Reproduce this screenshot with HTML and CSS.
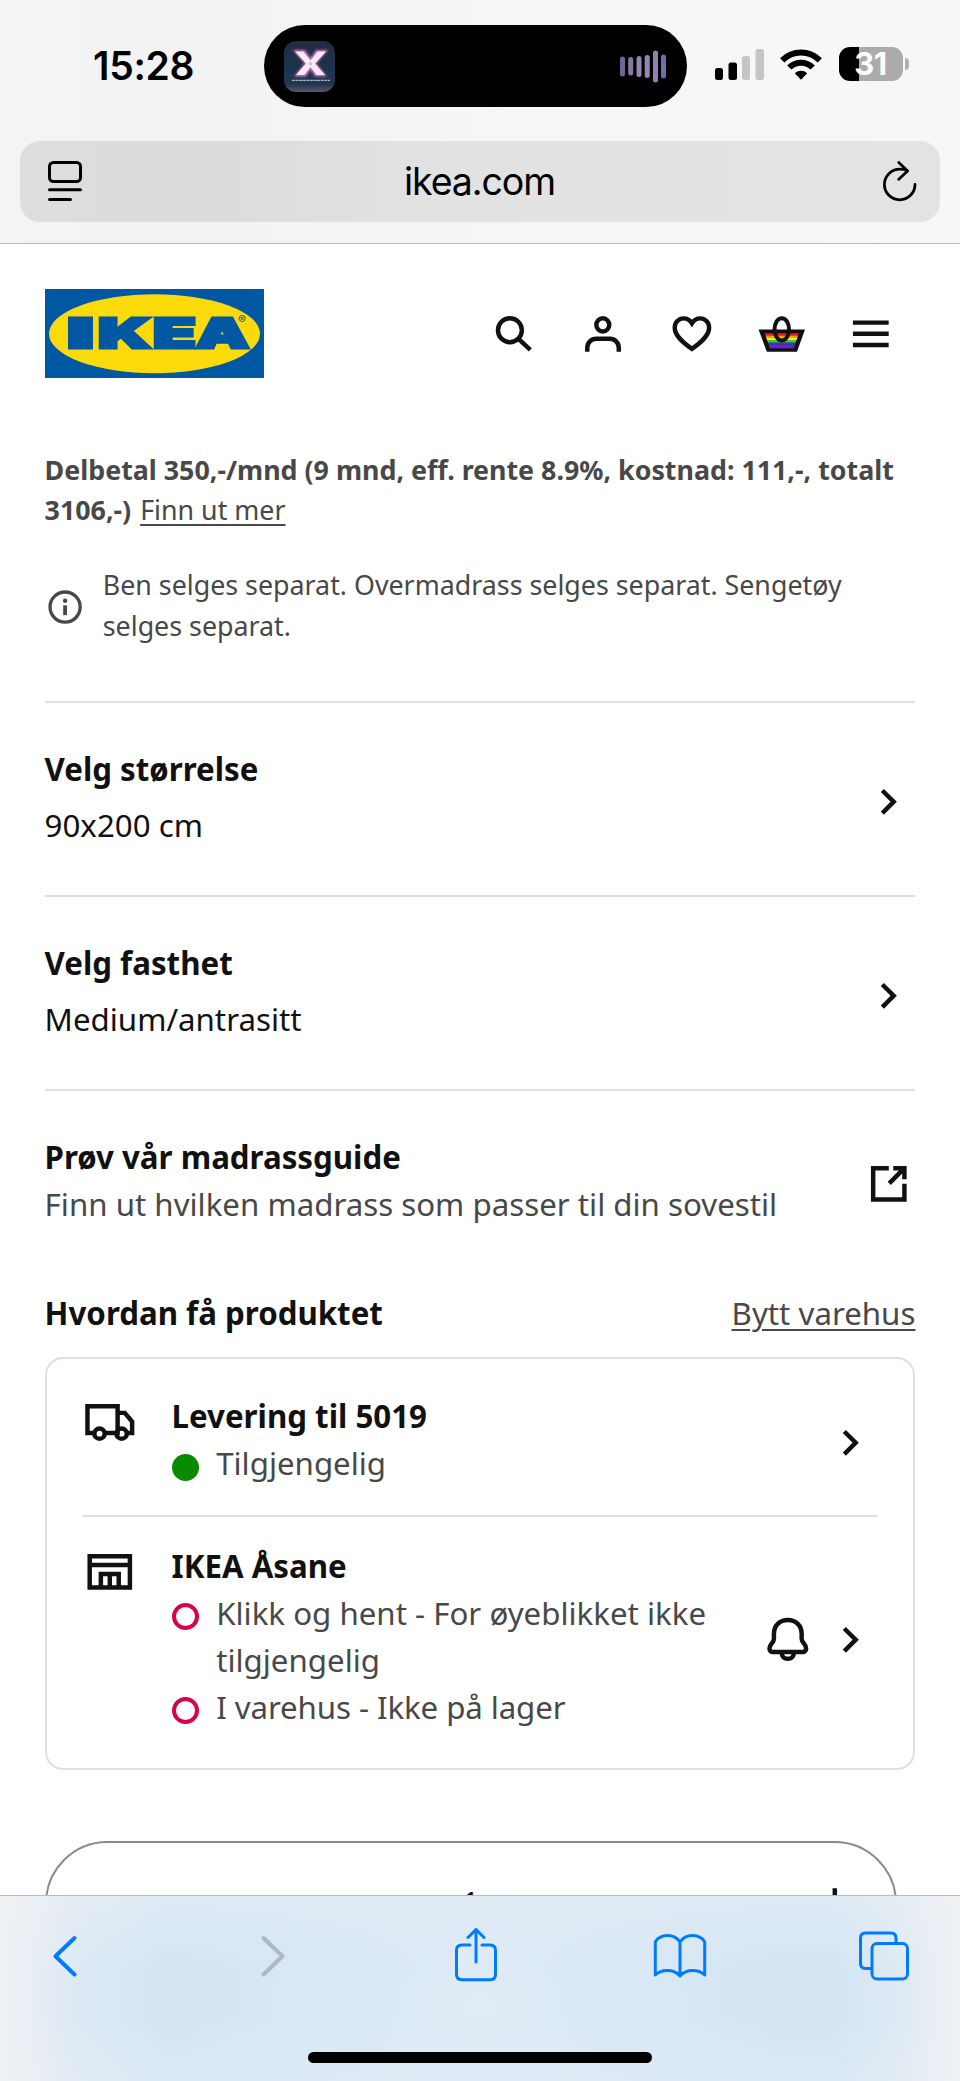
FILE: index.html
```html
<!DOCTYPE html>
<html lang="no">
<head>
<meta charset="utf-8">
<title>ikea.com</title>
<link rel="stylesheet" href="styles.css">
</head>
<body>
<div class="screen">
  <div class="browser-top">
    <div class="status">
      <div class="time">15:28</div>
      <div class="island">
        <svg class="art" viewBox="0 0 51 51">
          <defs>
            <linearGradient id="sky" x1="0" y1="0" x2="0" y2="1"><stop offset="0" stop-color="#222c40"/><stop offset=".6" stop-color="#1b3450"/><stop offset=".85" stop-color="#24364f"/><stop offset="1" stop-color="#5d5468"/></linearGradient>
            <filter id="glow"><feGaussianBlur stdDeviation="1"/></filter>
          </defs>
          <rect width="51" height="51" rx="12" fill="url(#sky)"/>
          <path d="M9 9H21L26.500 17 32 9H44L32.500 22.500 43 35.500H31L26.500 28.500 22 35.500H10L20.500 22.500Z" fill="#d873b4" filter="url(#glow)"/>
          <path d="M11 10.500H19.500L26.500 19.500 33.500 10.500H42L31 22.500 41 34H32.500L26.500 26 20.500 34H12L22 22.500Z" fill="#fbeaf5"/>
          <circle cx="26.500" cy="22.500" r="1.800" fill="#a9d8d0"/>
          <path d="M8 39.300H46" stroke="#9fb4c8" stroke-width="1.300" stroke-dasharray="3 .6"/>
        </svg>
        <svg class="wave" viewBox="0 0 46 33" stroke-width="5" stroke-linecap="round">
          <path d="M2.500 9V24" stroke="#6d6795"/><path d="M10.700 9.500V23" stroke="#86799f"/><path d="M19 8.500V24.500" stroke="#9585ab"/><path d="M27.200 7.500V25.500" stroke="#9586b0"/><path d="M35.500 3V30" stroke="#8b82b6"/><path d="M43.500 7V26" stroke="#6a72ae"/>
        </svg>
      </div>
      <svg class="signal" viewBox="0 0 49 31"><rect y="19" width="8" height="12" rx="2.500"/><rect x="13.500" y="13.500" width="8.500" height="17.500" rx="2.500"/><g fill="#c5c5c5"><rect x="27" y="7" width="8" height="24" rx="2.500"/><rect x="40.500" width="8.500" height="31" rx="2.500"/></g></svg>
      <svg class="wifi" viewBox="0 0 42 31" fill="none" stroke="#000" stroke-width="6"><path d="M2.200 11.300A26.500 26.500 0 0 1 39.800 11.300"/><path d="M9.300 18.500A16.500 16.500 0 0 1 32.700 18.500"/><path d="M14.800 24.200A9 9 0 0 1 27.200 24.200L21 30.700Z" fill="#000" stroke="none"/></svg>
      <div class="battery"><div class="cell">31</div><div class="nub"></div></div>
    </div>
    <div class="address">
      <svg class="reader" viewBox="0 0 34 41" fill="none" stroke="#000" stroke-width="3" stroke-linecap="round"><rect x="1.500" y="1.500" width="31" height="19" rx="4"/><path d="M1.500 28.800H32.500M1.500 38.500H22.500"/></svg>
      <span>ikea.com</span>
      <svg class="reload" viewBox="0 0 34 41" fill="none" stroke="#000" stroke-width="2.800" stroke-linecap="round" stroke-linejoin="round"><path d="M32 23.500A15.300 15.300 0 1 1 16.700 8.200C19.500 8.200 22 8.700 24.500 9.800"/><path d="M15.800 1.500 24.500 10 15.800 18.200"/></svg>
    </div>
  </div>

  <main class="page">
    <header class="header">
      <svg class="logo" viewBox="0 0 219 89">
        <rect width="219" height="89" fill="#0058a3"/>
        <ellipse cx="109.500" cy="44.700" rx="105.500" ry="39.500" fill="#fbda0c"/>
        <text class="wordmark" y="58.500"><tspan x="22" textLength="27" lengthAdjust="spacingAndGlyphs">I</tspan><tspan x="53" textLength="53" lengthAdjust="spacingAndGlyphs">K</tspan><tspan x="108" textLength="43" lengthAdjust="spacingAndGlyphs">E</tspan><tspan x="151" textLength="53" lengthAdjust="spacingAndGlyphs">A</tspan></text>
        <text class="reg" x="193" y="34.500">®</text>
      </svg>
      <nav class="nav">
        <svg class="icon" viewBox="0 0 24 24" fill="none" stroke="#111" stroke-width="2"><circle cx="10.260" cy="10.400" r="5.350"/><path d="M14 14.200 19.400 19.200"/></svg>
        <svg class="icon" viewBox="0 0 24 24" fill="none" stroke="#111" stroke-width="2"><ellipse cx="12" cy="8" rx="2.900" ry="2.950"/><path d="M5.050 20V18.200a4 4 0 0 1 4-4h6.100a4 4 0 0 1 4 4V20"/></svg>
        <svg class="icon" viewBox="0 0 24 24" fill="none" stroke="#111" stroke-width="2"><path d="M12.050 18.750C8.300 16.100 4.350 13 4.350 9.300 4.350 6.900 6.150 5.100 8.300 5.100c1.700 0 2.950.9 3.750 2.200.8-1.300 2.050-2.200 3.750-2.200 2.150 0 3.950 1.800 3.950 4.200 0 3.700-3.950 6.800-7.700 9.450Z"/></svg>
        <svg class="icon" viewBox="0 0 24 24"><path d="M1.600 10.050H22.400L18.800 20H5.300Z" fill="#111"/><path d="M4.400 11.700H19.600L19.200 13H4.800Z" fill="#f21b1b"/><path d="M4.800 12.900H19.200L18.900 14H5.100Z" fill="#ff9a1f"/><path d="M5.100 13.900H18.900L18.500 15H5.500Z" fill="#f6f51d"/><path d="M5.500 14.900H18.500L18.200 16H5.800Z" fill="#35d829"/><path d="M5.800 15.900H18.200L17.900 16.900H6.100Z" fill="#1d49c9"/><path d="M6.100 16.800H17.900L17.400 18.500H6.600Z" fill="#6a1fd6"/><ellipse cx="12" cy="10" rx="3.250" ry="5" fill="none" stroke="#111" stroke-width="1.800"/></svg>
        <svg class="icon" viewBox="0 0 24 24" fill="#111"><path d="M4 6H20V8H4ZM4 11H20V13H4ZM4 16H20V18H4Z"/></svg>
      </nav>
    </header>

    <p class="credit"><b>Delbetal 350,-/mnd (9 mnd, eff. rente 8.9%, kostnad: 111,-, totalt 3106,-)</b> <a>Finn ut mer</a></p>
    <div class="info">
      <svg viewBox="0 0 18 18"><circle cx="9" cy="9" r="6.750" fill="none" stroke="#484848" stroke-width="1.500"/><circle cx="9" cy="6.200" r="1" fill="#484848"/><path d="M8.150 8.200H9.850V12.600H8.150Z" fill="#484848"/></svg>
      <p>Ben selges separat. Overmadrass selges separat. Sengetøy selges separat.</p>
    </div>

    <section class="choice">
      <div><h2>Velg størrelse</h2><p>90x200 cm</p></div>
      <svg class="icon" viewBox="0 0 24 24"><path d="M15.600 12 9.815 17.786 8.400 16.372 12.771 12 8.400 7.629 9.815 6.215Z" fill="#111"/></svg>
    </section>
    <section class="choice">
      <div><h2>Velg fasthet</h2><p>Medium/antrasitt</p></div>
      <svg class="icon" viewBox="0 0 24 24"><path d="M15.600 12 9.815 17.786 8.400 16.372 12.771 12 8.400 7.629 9.815 6.215Z" fill="#111"/></svg>
    </section>
    <section class="choice guide">
      <div><h2>Prøv vår madrassguide</h2><p>Finn ut hvilken madrass som passer til din sovestil</p></div>
      <svg class="icon" viewBox="0 0 24 24" fill="none" stroke="#111" stroke-width="2"><path d="M12 5H5V19H19V12"/><path d="M14 5H19V10M19 5 12.200 11.800"/></svg>
    </section>

    <div class="get-head"><h2>Hvordan få produktet</h2><a>Bytt varehus</a></div>
    <section class="card">
      <div class="ship">
        <svg class="icon" viewBox="0 0 24 24" fill="none" stroke="#111" stroke-width="2"><path d="M4.700 17H2V5H15.500V17H9.700M15.500 8H18.700L22 11.900V17H19.500"/><circle cx="7.400" cy="17.300" r="2.300"/><circle cx="17.300" cy="17.300" r="2.300"/></svg>
        <div class="ship-text">
          <h2>Levering til 5019</h2>
          <p><i class="dot ok"></i>Tilgjengelig</p>
        </div>
        <svg class="icon" viewBox="0 0 24 24"><path d="M15.600 12 9.815 17.786 8.400 16.372 12.771 12 8.400 7.629 9.815 6.215Z" fill="#111"/></svg>
      </div>
      <div class="ship store">
        <svg class="icon" viewBox="0 0 24 24" fill="none" stroke="#111" stroke-width="2"><path d="M3 5H21V19H3ZM3 9H21M8 19V13H16V19M12 13V19"/></svg>
        <div class="ship-text">
          <h2>IKEA Åsane</h2>
          <p><i class="dot"></i>Klikk og hent - For øyeblikket ikke tilgjengelig</p>
          <p class="stock"><i class="dot"></i>I varehus - Ikke på lager</p>
        </div>
        <svg class="icon bell" viewBox="0 0 24 24" fill="none" stroke="#111" stroke-width="2"><path d="M12 3.100C8.300 3.100 5.800 5.800 5.800 9.200V11.400C5.800 12.500 5.500 12.900 4.800 13.600 4.200 14.300 3.800 14.900 3.800 15.900 3.800 16.900 4.500 17.500 5.400 17.500H18.600C19.500 17.500 20.200 16.900 20.200 15.900 20.200 14.900 19.800 14.300 19.200 13.600 18.500 12.900 18.200 12.500 18.200 11.400V9.200C18.200 5.800 15.700 3.100 12 3.100Z"/><path d="M9.300 17.500V18C9.300 19.500 10.400 20.500 12 20.500S14.700 19.500 14.700 18V17.500"/></svg>
        <svg class="icon" viewBox="0 0 24 24"><path d="M15.600 12 9.815 17.786 8.400 16.372 12.771 12 8.400 7.629 9.815 6.215Z" fill="#111"/></svg>
      </div>
    </section>

    <div class="quantity">
      <svg class="icon" viewBox="0 0 24 24"><path d="M5 11H19V13H5Z" fill="#111"/></svg>
      <span>1</span>
      <svg class="icon" viewBox="0 0 24 24"><path d="M11 5H13V11H19V13H13V19H11V13H5V11H11Z" fill="#111"/></svg>
    </div>
  </main>

  <footer class="toolbar">
    <div class="tools">
      <svg viewBox="0 0 60 56"><path d="M39.500 10 20.500 28.300 39.500 46.500"/></svg>
      <svg class="off" viewBox="0 0 60 56"><path d="M20.500 10 39.500 28.300 20.500 46.500"/></svg>
      <svg viewBox="0 0 60 56" stroke-width="3"><path d="M23 17H15C11.500 17 9.500 19 9.500 22V46.500C9.500 50 11.500 51.800 15 51.800H43C46.500 51.800 48.500 50 48.500 46.500V22C48.500 19 46.500 17 43 17H35"/><path d="M29 34V2M21 9.500 29 1.500 37 9.500"/></svg>
      <svg viewBox="0 0 60 56" stroke-width="3"><path d="M30 14C26 8 20 7.500 17.500 7.500 12 7.500 7.500 10.300 5.300 13.700V47C8.500 43.800 13 42.500 17.500 42.500 22.500 42.500 27 44.700 30 48 33 44.700 37.500 42.500 42.500 42.500 47 42.500 51.500 43.800 54.700 47V13.700C52.500 10.300 48 7.500 42.500 7.500 40 7.500 34 8 30 14V48"/></svg>
      <svg viewBox="0 0 60 56" stroke-width="3"><rect x="18" y="15.500" width="35.500" height="35.500" rx="5"/><path d="M42 15V10C42 6.500 40.500 5 37 5H11.500C8 5 6.500 6.500 6.500 10V35.500C6.500 39 8 40.500 11.500 40.500H17"/></svg>
    </div>
    <div class="home"></div>
  </footer>
</div>
</body>
</html>
```

FILE: styles.css
```css
* { box-sizing: border-box; }
body { margin: 0; background: #fff; font-family: "Noto Sans", sans-serif; color: #111; }
h2, p { margin: 0; font-size: 31.26px; line-height: 46.9px; }
h2 { font-weight: 700; }
svg { display: block; flex: none; }
a { text-decoration: underline; text-decoration-thickness: 2px; text-underline-offset: 4px; }

.screen { width: 960px; height: 2081px; display: flex; flex-direction: column; overflow: hidden; }

.browser-top {
  flex: none; height: 244px; padding: 25px 20px 0; border-bottom: 1px solid #b9b9b9;
  background: linear-gradient(90deg, #f4f4f4, #f2f2f2 18%, #f6f6f6 55%, #f7f7f7);
  font-family: Inter, sans-serif; color: #000;
}
.status { height: 82px; display: flex; align-items: center; }
.time { width: 244px; padding-left: 73px; font-size: 39px; font-weight: 600; line-height: 82px; letter-spacing: -.3px; }
.island { width: 423px; height: 82px; border-radius: 41px; background: #000; display: flex; align-items: center; justify-content: space-between; padding: 0 21px 0 20px; }
.art { width: 51px; height: 51px; }
.wave { width: 46px; height: 33px; }
.signal { width: 49px; height: 31px; margin-left: 28px; margin-top: -3px; }
.wifi { width: 42px; height: 31px; margin-left: 16px; margin-top: -3px; }
.battery { display: flex; align-items: center; gap: 2px; margin-left: 17px; margin-top: -4px; }
.cell { width: 64px; height: 34px; border-radius: 11px; background: linear-gradient(90deg, #000 20px, #ababab 20px); color: #fff; font-size: 31px; font-weight: 700; line-height: 34px; text-align: center; letter-spacing: -.5px; padding-right: 1px; }
.nub { width: 4px; height: 12px; border-radius: 0 5px 5px 0; background: #b0b0b0; }
.address {
  margin-top: 34px; height: 81px; border-radius: 20px; padding: 0 23px 0 28px;
  background: linear-gradient(90deg, #dedede, #dbdbdb 18%, #e2e2e2 45%, #e3e3e3);
  display: flex; align-items: center; justify-content: space-between; font-size: 37.500px; letter-spacing: -1.1px;
}
.address span { margin-right: 6px; }
.reader, .reload { width: 34px; height: 41px; }

.page { flex: 1; min-height: 0; overflow: hidden; padding: 45px 44.600px 0; }
.header { display: flex; align-items: center; height: 89px; }
.logo { width: 219px; height: 89px; }
.wordmark { font-family: Inter, sans-serif; font-weight: 900; font-size: 41.500px; fill: #0058a3; stroke: #0058a3; stroke-width: 3px; }
.reg { font-family: Inter, sans-serif; font-size: 12px; font-weight: 600; fill: #2e6569; }
.icon { width: 53.600px; height: 53.600px; }
.nav { display: flex; gap: 35.700px; margin-left: auto; margin-right: 17.800px; }

.credit, .info p { font-size: 26.800px; line-height: 40.200px; color: #484848; }
.credit { margin-top: 71.500px; }
.credit a { margin-left: 2px; }
.info { display: flex; align-items: center; gap: 18px; margin-top: 35.400px; margin-bottom: 55px; }
.info svg { width: 40.200px; height: 40.200px; margin-top: 4px; }

.choice { display: flex; align-items: center; justify-content: space-between; border-top: 2px solid #dfdfdf; height: 194.300px; padding-bottom: 3px; }
.choice p { margin-top: 8.900px; }
.choice .icon { margin-top: 9px; }
.guide { height: 137px; padding: 43.500px 0 0; }
.guide p { margin-top: 0; color: #484848; }
.guide .icon { margin-top: 6px; }

.get-head { display: flex; justify-content: space-between; margin-top: 63.500px; font-size: 31.260px; line-height: 46.900px; }
.get-head a { color: #484848; }
.card { margin-top: 20px; height: 413px; border: 2px solid #dfdfdf; border-radius: 18px; padding: 0 36px; }
.ship { display: flex; align-items: center; padding: 34.500px 0 28px; }
.ship .icon { margin-top: 5px; }
.ship .icon:first-child { align-self: flex-start; margin-top: 2px; }
.ship-text { flex: 1; margin-left: 35.400px; }
.ship-text p { color: #484848; padding-left: 44.600px; position: relative; }
.ship-text .stock { letter-spacing: -.1px; }
.dot { position: absolute; left: 0; top: 13.500px; width: 27px; height: 27px; border-radius: 50%; border: 4.500px solid #da0051; }
.dot.ok { background: #0a8a00; border: 0; }
.store { border-top: 2px solid #dfdfdf; padding-top: 26px; }
.bell { margin-right: 9px; }

.quantity { margin-top: 71.500px; width: 852px; height: 125px; border: 2px solid #8a8a8a; border-radius: 63px; padding: 0 33px; display: flex; align-items: center; justify-content: space-between; font-size: 31.260px; }
.quantity span { padding-bottom: 3px; }

.toolbar {
  flex: none; height: 186px; padding-top: 32px; border-top: 1px solid #b5bcc2;
  background:
    linear-gradient(90deg, #eff1f3, rgba(239,241,243,.35) 8%, rgba(239,241,243,0) 17%, rgba(239,241,243,0) 87%, rgba(239,241,243,.35) 93%, #eff1f3),
    linear-gradient(180deg, rgba(226,236,245,.8), rgba(226,236,245,0) 40%, rgba(226,236,245,0) 65%, rgba(226,236,245,.5)),
    radial-gradient(ellipse 300px 220px at 50% 60%, #e0ecf6, rgba(224,236,246,0)),
    #d3e5f3;
}
.tools { display: flex; justify-content: space-between; padding: 0 46px 0 34.500px; }
.tools svg { width: 60px; height: 56px; fill: none; stroke: #007aff; stroke-linecap: round; stroke-linejoin: round; }
.tools svg:first-child, .tools .off { stroke-width: 4px; }
.tools .off { stroke: #adb8c2; margin-left: 5px; }
.home { width: 344px; height: 11px; border-radius: 6px; background: #000; margin: 68px auto 0; }
```
